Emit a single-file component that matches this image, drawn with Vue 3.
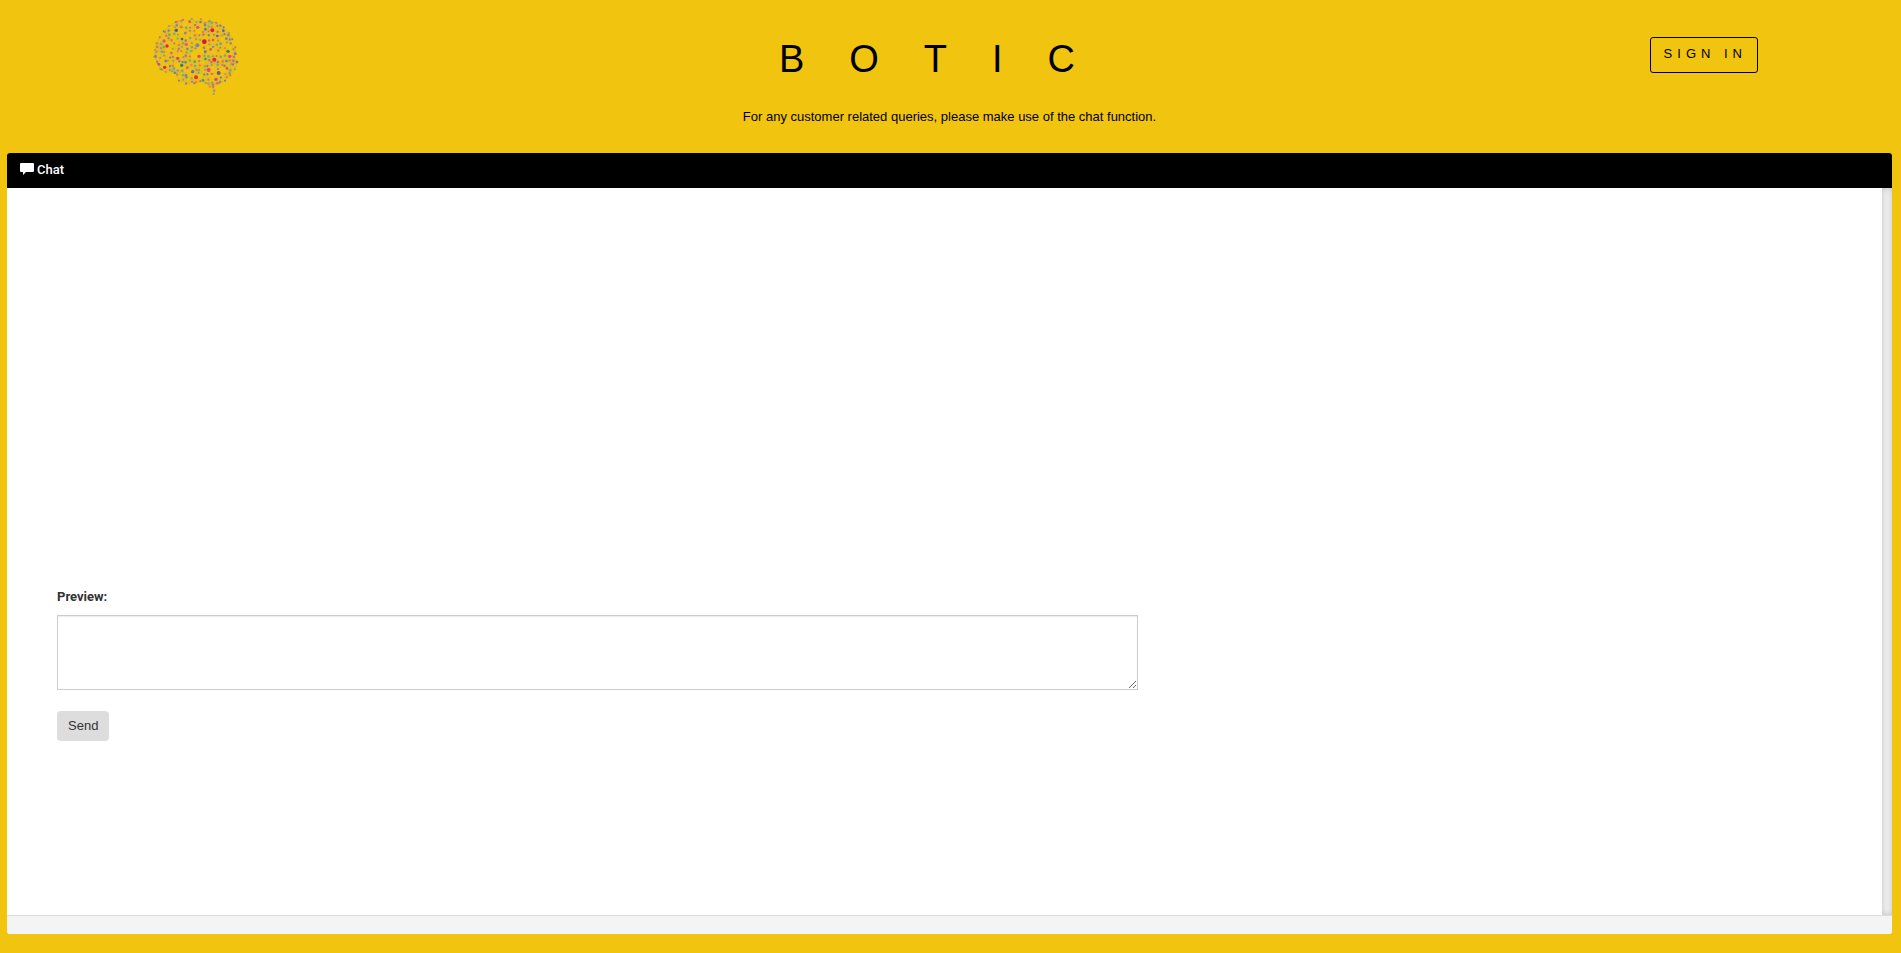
<script setup>
import { ref } from 'vue'

const message = ref('')

// Outline of the brain, in viewBox units
const outline = [
  [28, 140], [30, 120], [34, 100], [44, 82], [56, 64], [72, 48], [92, 36], [114, 29], [140, 26],
  [168, 27], [194, 32], [214, 38], [236, 52], [252, 68], [262, 88], [271, 112], [272, 132],
  [276, 156], [270, 178], [256, 196], [240, 212], [222, 220], [204, 224], [208, 242], [206, 252],
  [194, 230], [182, 218], [166, 214], [148, 220], [124, 222], [102, 212], [96, 194], [82, 184],
  [62, 186], [46, 178], [38, 160]
]

const mainDots = [
  [178, 95, 7, '#d5143f'], [202, 61, 6, '#ed1c3c'], [158, 52, 5, '#ec4d80'], [94, 61, 5, '#4a5585'],
  [66, 108, 5, '#e9203c'], [124, 103, 5, '#ec5590'], [157, 106, 6, '#8582a8'], [162, 139, 5, '#ec3d72'],
  [98, 145, 5, '#ed3b59'], [208, 149, 6, '#e7233e'], [191, 180, 6, '#ed3d86'], [143, 185, 5, '#4d76b5'],
  [153, 202, 6, '#e92e32'], [59, 172, 5, '#e52635'], [221, 189, 6, '#755895'], [254, 139, 5, '#e74281'],
  [249, 124, 5, '#33836d'], [57, 93, 5, '#e74b89'], [109, 51, 4, '#e16b67'], [181, 58, 4, '#6574a1'],
  [134, 35, 4, '#e84b5c'], [235, 62, 4, '#5269a0'], [250, 75, 4, '#8e8e73'], [213, 208, 5, '#e64178'],
  [110, 166, 5, '#347e70'], [127, 173, 4, '#ec5483'], [174, 211, 4, '#39a36b'], [246, 175, 4, '#e74c68'],
  [271, 131, 4, '#b1659c'], [276, 156, 4, '#8c727a'], [42, 163, 4, '#d34582'], [32, 139, 4, '#a27189'],
  [73, 74, 4, '#69b165'], [80, 91, 4, '#e38146'], [111, 87, 4, '#53608c'], [139, 123, 4, '#68b690'],
  [197, 118, 4, '#df5362'], [227, 101, 4, '#5eaa95'], [220, 122, 4, '#ef7d38'], [181, 147, 4, '#45966f'],
  [79, 129, 4, '#d4648a'], [149, 155, 4, '#4d9e9c'], [233, 154, 4, '#ea7d3d'], [181, 125, 4, '#786995'],
  [204, 90, 4, '#de5960'], [217, 78, 4, '#6a6487'], [150, 76, 4, '#df7e58'], [121, 69, 4, '#b0728b']
]

const palette = ['#63ad94', '#df6767', '#8c7b8b', '#e9823b', '#6282a2', '#c6688c', '#85a95c', '#b19268']

function inside(x, y) {
  let hit = false
  for (let i = 0, j = outline.length - 1; i < outline.length; j = i++) {
    const [ax, ay] = outline[i]
    const [bx, by] = outline[j]
    if (ay > y !== by > y && x < ((bx - ax) * (y - ay)) / (by - ay) + ax) hit = !hit
  }
  return hit
}

const smallDots = outline.map(([x, y], i) => [x, y, 3, palette[(i * 3) % palette.length]])
let seed = 17
const random = () => {
  seed = (seed * 16807) % 2147483647
  return seed / 2147483647
}
for (let y = 36; y < 245; y += 13) {
  for (let x = 34; x < 275; x += 13) {
    const px = x + random() * 8 - 4
    const py = y + random() * 8 - 4
    const color = palette[Math.floor(random() * palette.length)]
    const clear = mainDots.every(([mx, my]) => Math.hypot(mx - px, my - py) > 10)
    if (inside(px, py) && clear) smallDots.push([px, py, 2.6 + random() * 1.2, color])
  }
}

const dots = [...smallDots, ...mainDots]
let mesh = ''
dots.forEach(([ax, ay], i) => {
  for (const [bx, by] of dots.slice(i + 1)) {
    if (Math.hypot(ax - bx, ay - by) < 24) mesh += `M${ax} ${ay}L${bx} ${by}`
  }
})
</script>

<template>
  <div class="page">
    <header class="top">
      <svg class="logo" viewBox="0 0 300 270" role="img" aria-label="Botic logo">
        <path :d="mesh" class="mesh" />
        <circle v-for="([x, y, r, color], i) in dots" :key="i" :cx="x" :cy="y" :r="r" :fill="color" />
      </svg>
      <div class="brand">
        <h1>BOTIC</h1>
        <p>For any customer related queries, please make use of the chat function.</p>
      </div>
      <button type="button" class="sign-in">SIGN IN</button>
    </header>

    <main class="panel">
      <h2 class="panel-head">
        <svg class="bubble" viewBox="0 0 14 13" aria-hidden="true">
          <path d="M1 0h12q1 0 1 1v7q0 1-1 1H6l-3 3V9H1Q0 9 0 8V1q0-1 1-1z" />
        </svg>
        Chat
      </h2>
      <div class="panel-body">
        <form class="chat-form" @submit.prevent>
          <label for="preview">Preview:</label>
          <textarea id="preview" v-model="message"></textarea>
          <button type="submit" class="send">Send</button>
        </form>
        <div class="track"></div>
      </div>
      <footer class="panel-foot"></footer>
    </main>
  </div>
</template>

<style>
body {
  background: #f1c40f;
}
</style>

<style scoped>
.page {
  box-sizing: border-box;
  display: flex;
  flex-direction: column;
  min-height: 100vh;
  padding: 0 9px 19px 7px;
  background: #f1c40f;
  color: #333;
  font: 13px/20px "Liberation Sans", Arial, sans-serif;
}
.top {
  display: grid;
  grid-template-columns: 1fr auto 1fr;
  align-items: start;
  height: 153px;
  padding: 0 134px;
  box-sizing: border-box;
  color: #000;
}
.logo {
  width: 100px;
  height: 90px;
  margin: 10px 0 0 4px;
}
.mesh {
  fill: none;
  stroke: #a99b78;
  stroke-width: 1;
  opacity: 0.7;
}
.brand {
  text-align: center;
}
h1 {
  margin: 37px 0 0;
  font-size: 38px;
  font-weight: 400;
  line-height: 44px;
  letter-spacing: 45px;
}
.brand p {
  margin: 26px 0 0;
}
.sign-in {
  justify-self: end;
  height: 36px;
  margin-top: 37px;
  padding: 0 10px 2px 13px;
  border: 1px solid #000;
  border-radius: 3px;
  background: transparent;
  color: #000;
  font: inherit;
  letter-spacing: 5px;
}
.panel {
  flex: 1;
  display: flex;
  flex-direction: column;
  overflow: hidden;
  border-radius: 3px;
  background: #fff;
}
.panel-head {
  display: flex;
  align-items: center;
  gap: 3px;
  height: 35px;
  margin: 0;
  padding: 0 13px 2px;
  box-sizing: border-box;
  background: #000;
  color: #fff;
  font: 500 13px/20px Roboto, Arial, sans-serif;
}
.bubble {
  width: 14px;
  height: 13px;
  fill: #fff;
}
.panel-body {
  flex: 1;
  display: flex;
  justify-content: space-between;
}
.chat-form {
  flex: none;
  display: flex;
  flex-direction: column;
  align-items: flex-start;
  width: 60%;
  padding: 399px 0 0 50px;
  box-sizing: border-box;
}
label {
  font: 700 13px/20px Roboto, Arial, sans-serif;
}
textarea {
  width: 100%;
  height: 75px;
  margin: 8px 0 21px;
  padding: 6px 12px;
  box-sizing: border-box;
  border: 1px solid #ccc;
  box-shadow: inset 0 1px 1px rgba(0, 0, 0, 0.08);
  color: #555;
  font: inherit;
  outline: none;
}
.send {
  height: 30px;
  padding: 0 11px;
  border: 0;
  border-radius: 4px;
  background: #ddd;
  color: #333;
  font: inherit;
}
.track {
  width: 10px;
  background: #f0f0f0;
  box-shadow: inset 0 0 6px rgba(0, 0, 0, 0.2);
}
.panel-foot {
  height: 18px;
  border-top: 1px solid #ddd;
  background: #f4f4f4;
}
</style>
